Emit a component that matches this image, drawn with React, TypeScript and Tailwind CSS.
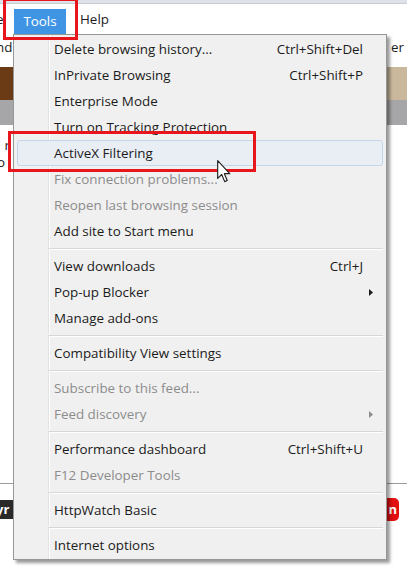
import { Fragment } from "react";

type Item = {
  label: string;
  shortcut?: string;
  disabled?: boolean;
  sub?: boolean;
  active?: boolean;
};

const groups: Item[][] = [
  [
    { label: "Delete browsing history...", shortcut: "Ctrl+Shift+Del" },
    { label: "InPrivate Browsing", shortcut: "Ctrl+Shift+P" },
    { label: "Enterprise Mode" },
    { label: "Turn on Tracking Protection" },
    { label: "ActiveX Filtering", active: true },
    { label: "Fix connection problems...", disabled: true },
    { label: "Reopen last browsing session", disabled: true },
    { label: "Add site to Start menu" },
  ],
  [
    { label: "View downloads", shortcut: "Ctrl+J" },
    { label: "Pop-up Blocker", sub: true },
    { label: "Manage add-ons" },
  ],
  [{ label: "Compatibility View settings" }],
  [
    { label: "Subscribe to this feed...", disabled: true },
    { label: "Feed discovery", disabled: true, sub: true },
  ],
  [
    { label: "Performance dashboard", shortcut: "Ctrl+Shift+U" },
    { label: "F12 Developer Tools", disabled: true },
  ],
  [{ label: "HttpWatch Basic" }],
  [{ label: "Internet options" }],
];

const MenuRow = ({ item }: { item: Item }) => (
  <div
    className={`mx-[3px] h-[26px] flex items-center pl-[36px] pr-[9px] rounded-[3px] border ${
      item.active ? "bg-[#e9eef5] border-[#c3d5ea]" : "border-transparent"
    } ${item.disabled ? "text-[#8c8c8c]" : "text-[#1b1b1b]"}`}
  >
    <span className="flex-1 whitespace-nowrap">{item.label}</span>
    {item.shortcut && <span className="whitespace-nowrap">{item.shortcut}</span>}
    <span className="w-[10px] flex justify-end">
      {item.sub && (
        <svg width="4" height="7" viewBox="0 0 4 7">
          <path d="M0 0 L4 3.5 L0 7 Z" fill={item.disabled ? "#8c8c8c" : "#1b1b1b"} />
        </svg>
      )}
    </span>
  </div>
);

const Separator = () => (
  <div className="h-[9px] flex flex-col justify-center pl-[35px] pr-[3px]">
    <div className="h-px bg-[#d7d7d7]" />
    <div className="h-px bg-white" />
  </div>
);

const Cursor = () => (
  <svg className="absolute left-[217px] top-[160px]" width="14" height="23" viewBox="0 0 12 20">
    <path
      d="M0.5 0.5 L0.5 16 L4 12.6 L6.6 18.8 L8.8 17.9 L6.3 11.9 L11 11.9 Z"
      fill="white"
      stroke="#222"
      strokeWidth="1"
      strokeLinejoin="round"
    />
  </svg>
);

export default function App() {
  return (
    <div className="relative w-[407px] h-[572px] overflow-hidden bg-white font-['Segoe_UI','Open_Sans',sans-serif] text-[13.4px]">
      {/* page behind the menu */}
      <div className="h-[4px] bg-[#dde2e8] border-b border-[#c9cdd2]" />
      <div className="h-[30px] flex items-center text-[#1b1b1b]">
        <span className="-ml-[4px] w-[18px]">e</span>
        <div className="w-[52px] h-[25px] mt-[5px] bg-[#3f95e4] text-white flex items-center justify-center">Tools</div>
        <span className="ml-[14px]">Help</span>
      </div>
      <div className="h-[26px] flex items-center justify-between text-[#1b1b1b]">
        <span className="-ml-[4px]">nd</span>
        <span className="mr-[3px]">er</span>
      </div>
      <div className="h-[7px]" />
      <div className="h-[33px] flex justify-between">
        <div className="w-[14px] bg-[#6a3b14]" />
        <div className="w-[22px] bg-[#c9b89c]" />
      </div>
      <div className="h-[25px] bg-[#a6a6a8]" />
      <div className="h-[10px]" />
      <div className="h-[20px] flex items-center text-[#1b1b1b]">
        <span className="w-[10px] text-right">r</span>
      </div>
      <div className="h-[14px] text-[#1b1b1b] leading-[14px]">
        <span className="-ml-[3px]">o</span>
      </div>
      <div className="h-[314px]" />
      <div className="h-px bg-[#9c9c9c]" />
      <div className="h-[14px]" />
      <div className="h-[22px] flex items-center justify-between">
        <div className="w-[14px] h-[19px] bg-[#2a2a2a] text-white font-bold text-[13px] leading-[19px] overflow-hidden">
          <span className="-ml-[4px]">yr</span>
        </div>
        <div className="w-[20px] h-[23px] bg-[#e31010] rounded-[5px] mr-[8px] text-white font-bold text-[13px] leading-[23px] text-right pr-[2px]">
          n
        </div>
      </div>

      {/* Tools dropdown */}
      <div className="absolute left-[13px] top-[34px] w-[374px] bg-[#f0f0f0] border border-[#979797] py-px shadow-[3px_3px_3px_rgba(0,0,0,0.4)]">
        <div className="absolute left-[34px] top-0 bottom-0 w-px bg-[#e2e3e3]" />
        <div className="absolute left-[35px] top-0 bottom-0 w-px bg-white" />
        <div className="relative">
          {groups.map((g, gi) => (
            <Fragment key={gi}>
              {gi > 0 && <Separator />}
              {g.map((it) => (
                <MenuRow key={it.label} item={it} />
              ))}
            </Fragment>
          ))}
        </div>
      </div>

      {/* annotation boxes */}
      <div className="absolute left-[3px] -top-[2px] w-[75px] h-[42px] border-[3px] border-[#e8161c]" />
      <div className="absolute left-[8px] top-[131px] w-[248px] h-[41px] border-[3px] border-[#e8161c]" />
      <Cursor />
    </div>
  );
}
